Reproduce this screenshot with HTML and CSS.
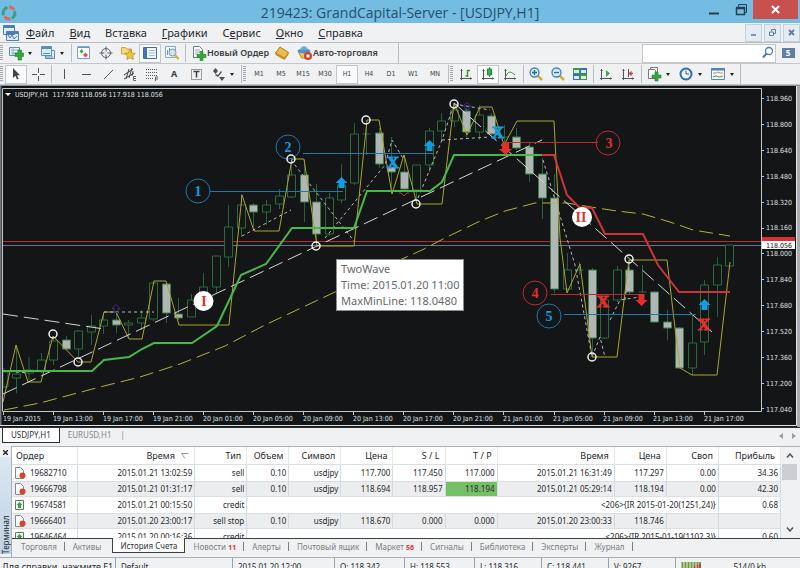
FILE: index.html
```html
<!DOCTYPE html>
<html lang="ru">
<head>
<meta charset="utf-8">
<title>219423: GrandCapital-Server - [USDJPY,H1]</title>
<link rel="stylesheet" href="styles.css">
</head>
<body>
<header class="titlebar">
  <svg class="logo" width="18" height="18" viewBox="0 0 18 18" fill="none" stroke-width="3"><path d="M9 3a6 6 0 0 1 5 3" stroke="#e8635a"/><path d="M14.4 7a6 6 0 0 1-2.400 7.200" stroke="#3aa08c"/><path d="M10.500 14.800a6 6 0 0 1-6-2.200" stroke="#e8635a"/><path d="M3.600 11.300a6 6 0 0 1 3.800-8" stroke="#3aa08c"/></svg>
  <h1>219423: GrandCapital-Server - [USDJPY,H1]</h1>
  <div class="window-buttons">
    <button aria-label="Свернуть"><svg width="12" height="18" viewBox="0 0 12 18"><path d="M1 12.500h10" stroke="#24404f" stroke-width="2"/></svg></button>
    <button aria-label="Восстановить"><svg width="12" height="18" viewBox="0 0 12 18" fill="none" stroke="#24404f"><path d="M3.500 5.500v-2h8v8h-2"/><path d="M1 6.500h8.500v7h-8v-7M1 7.500h8" stroke-width="1.500"/></svg></button>
    <button class="close" aria-label="Закрыть"><svg width="9" height="9" viewBox="0 0 9 9"><path d="M1 1l7 7M8 1l-7 7" stroke="#fff" stroke-width="2"/></svg></button>
  </div>
</header>

<nav class="menubar">
  <svg width="16" height="16" viewBox="0 0 16 16" fill="#dcecf8" stroke="#4d7fb3"><path d="M.5.500h11v9h-11zM3.500 6.500h12v9h-12z"/><path d="M.5 2h11M3.500 8h12" stroke-width="2"/><path d="M5 10l2 3 2-3 2 4 3-3" fill="none"/></svg>
  <a href="#file"><u>Ф</u>айл</a>
  <a href="#view"><u>В</u>ид</a>
  <a href="#insert">Вст<u>а</u>вка</a>
  <a href="#charts"><u>Г</u>рафики</a>
  <a href="#service">С<u>е</u>рвис</a>
  <a href="#window"><u>О</u>кно</a>
  <a href="#help"><u>С</u>правка</a>
  <div class="mdi-buttons">
    <button aria-label="Свернуть окно"><svg width="9" height="9" viewBox="0 0 9 9"><path d="M2 7h5" stroke="#5f7d96" stroke-width="1.500"/></svg></button>
    <button aria-label="Восстановить окно"><svg width="9" height="9" viewBox="0 0 9 9" fill="none" stroke="#5f7d96"><path d="M3.500 3v-1.500h4v4H6M1.500 4h4v3.500h-4z"/></svg></button>
    <button aria-label="Закрыть окно"><svg width="9" height="9" viewBox="0 0 9 9"><path d="M2 2l5 5M7 2l-5 5" stroke="#5f7d96" stroke-width="1.800"/></svg></button>
  </div>
</nav>

<div class="toolbar">
  <i class="grip"></i>
  <button class="split" aria-label="Новый график"><svg width="16" height="16" viewBox="0 0 16 16"><path d="M1.500 2.500h10v8h-10z" fill="#e4f1fa" stroke="#5d8db8"/><path d="M3 5h7M3 8h7M5 3v7" stroke="#8ab0d0"/><path d="M7 8h3V5h3.500v3h2v3.500h-2V15H10v-3.500H7z" fill="#35a83c" stroke="#1e7f28" stroke-width=".6"/></svg><span class="caret"></span></button>
  <button class="split" aria-label="Профили"><svg width="16" height="16" viewBox="0 0 16 16" fill="#dcecf8" stroke="#5d8db8"><path d="M5.500 5.500h9v8h-9z"/><path d="M1.500 1.500h10v9h-10z"/><path d="M1.500 3h10" stroke-width="2"/><path d="M3 8.500h7M5 12h8"/></svg><span class="caret"></span></button>
  <i class="sep"></i>
  <button aria-label="Обзор рынка"><svg width="16" height="16" viewBox="0 0 16 16"><path d="M1.500 2.500h12v11h-12z" fill="#fff" stroke="#7ba0c4"/><path d="M1.500 2h12" stroke="#5f93c8" stroke-width="1.500"/><path d="M5.500 4l2 2.500-2 2-2-2z" fill="#3caa44"/><path d="M9.500 7.500l2.500 2.500-2.500 2.500L7 10z" fill="#dc5148"/></svg></button>
  <button aria-label="Окно данных"><svg width="16" height="16" viewBox="0 0 16 16" fill="none" stroke="#56606a"><circle cx="8" cy="8" r="4.500"/><path d="M8 1.500v5M8 9.500v5M1.500 8h5M9.500 8h5"/></svg></button>
  <button aria-label="Навигатор"><svg width="16" height="16" viewBox="0 0 16 16" stroke="#b28d25" stroke-width=".7"><path d="M1.500 9V2.500h4l1 1.500h5v5z" fill="#f6dc77"/><path d="M10 4.500l1.700 3.400 3.600.5-2.600 2.500.6 3.600-3.300-1.700-3.200 1.700.6-3.600L4.800 8.400l3.600-.5z" fill="#f1c535"/></svg></button>
  <button class="pressed" aria-label="Терминал"><svg width="16" height="16" viewBox="0 0 16 16"><path d="M1.500 2.500h13v11h-13z" fill="#eef5fb" stroke="#3f6d9e"/><path d="M2 3h3v10H2z" fill="#3f79b7"/><path d="M7 5.500h6M7 8h6M7 10.500h6" stroke="#a7c2dc"/></svg></button>
  <button aria-label="Тестер"><svg width="16" height="16" viewBox="0 0 16 16"><path d="M1.500 1.500h10v11h-10z" fill="#f1f7fb" stroke="#8daac2"/><path d="M3.500 10V5M5.500 8V3M9 6V4" stroke="#6e95b8"/><circle cx="8.500" cy="7.500" r="3.500" fill="#cfe4f2" stroke="#789bb5"/><path d="M11 10l3.500 4" stroke="#d6a93c" stroke-width="2"/></svg></button>
  <i class="sep"></i>
  <button class="labelled"><svg width="16" height="16" viewBox="0 0 16 16"><path d="M2.500 1.500h6l3 3v8h-9z" fill="#fff" stroke="#707d86"/><path d="M4 5h5M4 7h5M4 9h3" stroke="#98a5ad"/><path d="M6 9.500h3v-3h3v3h3v3h-3v3H9v-3H6z" fill="#35a83c" stroke="#1e7f28" stroke-width=".6"/></svg>Новый Ордер</button>
  <button aria-label="MetaEditor"><svg width="16" height="16" viewBox="0 0 16 16"><path d="M6 2l8.500 5.500-4 5.500L1.500 8z" fill="#efbd43" stroke="#b37a1d"/><path d="M1.500 8v2l9 5 4-5.500v-2l-4 5.500z" fill="#c88b22"/></svg></button>
  <button class="labelled"><svg width="16" height="16" viewBox="0 0 16 16"><path d="M1.500 7h11l-2 6h-6z" fill="#f1c64b" stroke="#b88e29"/><ellipse cx="7" cy="6" rx="6.500" ry="2.500" fill="#4d93cd"/><path d="M3 5c1-5 7-5 8 0z" fill="#6badd9"/><circle cx="11" cy="11" r="4" fill="#d83a30"/><path d="M9.500 9.500h3v3h-3z" fill="#fff"/></svg>Авто-торговля</button>
  <i class="toolbar-end"></i>
  <div class="search">
    <input type="search" aria-label="Поиск">
    <svg width="14" height="14" viewBox="0 0 14 14" fill="none" stroke="#5378ac"><circle cx="8" cy="5" r="3.500" stroke-width="1.300"/><path d="M5.500 7.500L2 11.500" stroke-width="2"/></svg>
  </div>
  <button class="chat" aria-label="Сообщения: 5"><span>5</span></button>
</div>

<div class="toolbar">
  <i class="grip"></i>
  <button class="pressed" aria-label="Курсор"><svg width="16" height="16" viewBox="0 0 16 16"><path d="M5 2v10l2.400-2.200L9 13.500l1.600-.7L9 9.300h3z" fill="#3f4347"/></svg></button>
  <button aria-label="Перекрестие"><svg width="16" height="16" viewBox="0 0 16 16"><path d="M8.500 2v5M8.500 10v5M2 8.500h5M10 8.500h5" stroke="#555"/></svg></button>
  <i class="sep"></i>
  <button aria-label="Вертикальная линия"><svg width="16" height="16" viewBox="0 0 16 16"><path d="M8.500 3v10" stroke="#555"/></svg></button>
  <button aria-label="Горизонтальная линия"><svg width="16" height="16" viewBox="0 0 16 16"><path d="M4 8.500h9" stroke="#555"/></svg></button>
  <button aria-label="Трендовая линия"><svg width="16" height="16" viewBox="0 0 16 16"><path d="M4 13l9-9" stroke="#555"/></svg></button>
  <button aria-label="Канал"><svg width="16" height="16" viewBox="0 0 16 16" fill="none" stroke="#444"><path d="M2 9l9-6M2 13l10-6M4 13l3-10M7 12l3-10M10 10l1-5"/><path d="M14 10.500h-2.500v4H14M11.500 12.500H14" stroke-width=".8"/></svg></button>
  <button aria-label="Фибоначчи"><svg width="16" height="16" viewBox="0 0 16 16" stroke="#555"><path d="M2 3.500h12M2 6.500h12M2 9.500h12M2 12.500h7" stroke-dasharray="1 1"/><path d="M11.500 15v-4H14M11.500 13H14" fill="none" stroke-width=".9"/></svg></button>
  <button class="letter" aria-label="Текст">A</button>
  <button aria-label="Метка"><svg width="16" height="16" viewBox="0 0 16 16" fill="none" stroke="#444"><path d="M3.500 3.500h10v10h-10z" stroke-dasharray="1 1"/><path d="M5.500 5.500h6M8.500 5.500v6" stroke-width="1.500"/></svg></button>
  <button class="split" aria-label="Стрелки"><svg width="16" height="16" viewBox="0 0 16 16" fill="#4b4f53"><path d="M3 5l2.500-3L8 5 5.500 8zM9 11h6l-3 4zM6 8l2 1 3-4 1 1-4 5-3-2z"/></svg><span class="caret"></span></button>
  <i class="sep"></i><i class="grip"></i>
  <div class="timeframes">
    <button>M1</button><button>M5</button><button>M15</button><button>M30</button><button class="pressed">H1</button><button>H4</button><button>D1</button><button>W1</button><button>MN</button>
  </div>
  <i class="sep"></i><i class="grip"></i>
  <button aria-label="Бары"><svg width="16" height="16" viewBox="0 0 16 16" fill="none" stroke="#555"><path d="M3.500 3v11M2 12.500h12M2.500 4.500h2M12.500 11.500v2"/><path d="M9.500 4v7M9.500 4.500h2.500M7.500 10h2" stroke="#2e9b3a" stroke-width="1.500"/></svg></button>
  <button class="pressed" aria-label="Свечи"><svg width="16" height="16" viewBox="0 0 16 16" fill="none" stroke="#555"><path d="M3.500 3v11M2 12.500h12M2.500 4.500h2M12.500 11.500v2"/><path d="M9.500 1v10" stroke="#2e9b3a"/><path d="M7.500 3h4v6h-4z" fill="#37b046" stroke="#23873a"/></svg></button>
  <button aria-label="Линия"><svg width="16" height="16" viewBox="0 0 16 16" fill="none" stroke="#555"><path d="M3.500 3v11M2 12.500h12M2.500 4.500h2M12.500 11.500v2"/><path d="M4 10c3-6 5-4 9-1" stroke="#2e9b3a"/></svg></button>
  <i class="sep"></i>
  <button aria-label="Приблизить"><svg width="16" height="16" viewBox="0 0 16 16"><path d="M9.500 9.500l4.500 4.500" stroke="#d8ab34" stroke-width="2.500"/><circle cx="6.500" cy="6.500" r="4.500" fill="#d5ebf8" stroke="#3c84bd" stroke-width="1.300"/><path d="M4 6.500h5M6.500 4v5" stroke="#2769a5" stroke-width="1.300"/></svg></button>
  <button aria-label="Отдалить"><svg width="16" height="16" viewBox="0 0 16 16"><path d="M9.500 9.500l4.500 4.500" stroke="#d8ab34" stroke-width="2.500"/><circle cx="6.500" cy="6.500" r="4.500" fill="#d5ebf8" stroke="#3c84bd" stroke-width="1.300"/><path d="M4 6.500h5" stroke="#2769a5" stroke-width="1.300"/></svg></button>
  <button aria-label="Плитка"><svg width="16" height="16" viewBox="0 0 16 16"><path d="M1 2h7v6H1zM8 8h7v6H8z" fill="#3d9b44"/><path d="M8 2h7v6H8zM1 8h7v6H1z" fill="#3a6fb5"/><path d="M2 4h5v3H2zM9 4h5v3H9zM2 10h5v3H2zM9 10h5v3H9z" fill="#dcefe2"/></svg></button>
  <i class="sep"></i>
  <button aria-label="Автопрокрутка"><svg width="16" height="16" viewBox="0 0 16 16" fill="none" stroke="#555"><path d="M3.500 3v11M2 12.500h12M2.500 4.500h2M12.500 11.500v2"/><path d="M8 4l4 3.500L8 11z" fill="#39a847" stroke="none"/></svg></button>
  <button aria-label="Сдвиг графика"><svg width="16" height="16" viewBox="0 0 16 16" fill="none" stroke="#555"><path d="M3.500 3v11M2 12.500h12M2.500 4.500h2M12.500 11.500v2M8.500 3v8"/><path d="M9 7.500h4M11.500 5.500L9.500 7.500l2 2" stroke="#d0453b" stroke-width="1.300"/></svg></button>
  <i class="sep"></i>
  <button class="split" aria-label="Индикаторы"><svg width="16" height="16" viewBox="0 0 16 16"><path d="M4.500 1.500h7v10h-7z" fill="#fff" stroke="#777"/><path d="M2.500 3.500h6l1 1v8h-7z" fill="#fff" stroke="#777"/><path d="M6 9h3V6h3v3h3v3h-3v3H9v-3H6z" fill="#35a83c" stroke="#1e7f28" stroke-width=".6"/></svg><span class="caret"></span></button>
  <button class="split" aria-label="Периоды"><svg width="16" height="16" viewBox="0 0 16 16"><circle cx="8" cy="8" r="5.500" fill="#edf6fc" stroke="#2d6cab" stroke-width="2"/><path d="M8 4.500V8h3" fill="none" stroke="#35597c"/></svg><span class="caret"></span></button>
  <button class="split" aria-label="Шаблоны"><svg width="16" height="16" viewBox="0 0 16 16"><path d="M1.500 2.500h13v11h-13z" fill="#f4f9fc" stroke="#5c87b2"/><path d="M1 3.500h14" stroke="#4b80b8" stroke-width="2"/><path d="M3 7h3l2-1 2 1h3" fill="none" stroke="#c58b50"/><path d="M3 11l3-1 3 1 4-1" fill="none" stroke="#4b9b5a"/></svg><span class="caret"></span></button>
  <i class="toolbar-end"></i>
</div>

<main class="chart">
<svg class="plot" viewBox="0 85 800 342" role="img" aria-label="USDJPY,H1">
  <rect x="0" y="85" width="800" height="342" fill="#141517"/>
  <path d="M0 85.500h800" stroke="#8a9294"/>
  <path d="M0 86v340" stroke="#737a80" stroke-width="3"/>
  <path d="M0 425.500h796.500V86" fill="none" stroke="#e4e6e8"/>
  <path d="M798.500 86v341" stroke="#a9abae" stroke-width="3"/>
  <path d="M3 241.500h758" stroke="#b52f30"/>
  <path d="M3 245.500h758" stroke="#69748c"/>
  <g class="candles">
    <path class="wick" d="M4 368v20M16.500 345v48M29 357v25M41.500 353v20M53.500 338v27M66.500 336v14M78.500 330v27M91.500 315v30M103.500 313v21M116.500 313v20M128.500 320v18M141.500 310v20M153.500 281v40M166.500 282v41M178.500 298v22M191.500 294v23M203.500 273v19M216.500 256v38M228.500 205v62M241.500 194v43M253.500 203v26M266.500 200v25M279.500 189v20M291.500 159v39M304.500 160v62M316.500 184v61M329.500 193v43M341.500 164v39M354.500 123v62M366.500 120v35M379.500 128v40M391.500 137v56M404.500 155v37M416.500 165v35M429.500 128v44M441.500 113v29M454.500 105v22M466.500 108v29M479.500 105v35M491.500 113v25M504.500 125v22M516.500 128v22M529.500 143v39M542.500 158v61M554.500 174v119M567.500 253v39M579.500 262v13M592.500 268v89M604.500 298v41M617.500 266v36M629.500 260v35M642.500 265v28M654.500 291v32M667.500 310v30M679.500 327v42M692.500 315v60M704.500 280v75M717.500 257v60M729.500 245v24"/>
    <path class="up" d="M3 372h5v15h-5zM12.500 374h8v4h-8zM25.500 370h8v3h-8zM37.500 360h8v11h-8zM49.500 341h8v19h-8zM74.500 331h8v18h-8zM87.500 326h8v6h-8zM99.500 320h8v6h-8zM124.500 323h8v2h-8zM137.500 318h8v5h-8zM149.500 283h8v36h-8zM187.500 300h8v17h-8zM199.500 287h8v13h-8zM212.500 256h8v31h-8zM224.500 227h8v30h-8zM237.500 205h8v23h-8zM262.500 205h8v7h-8zM275.500 196h8v8h-8zM287.500 175h8v22h-8zM325.500 198h8v36h-8zM337.500 185h8v15h-8zM350.500 134h8v49h-8zM362.500 134h8M412.500 165h8v25h-8zM425.500 131h8v34h-8zM437.500 121h8v10h-8zM450.500 110h8v11h-8zM475.500 115h8v17h-8zM500.500 137h8M563.500 270h8v19h-8zM575.500 270h8M600.500 300h8v38h-8zM613.500 270h8v30h-8zM638.500 292h8M688.500 343h8v25h-8zM700.500 285h8v57h-8zM713.500 265h8v20h-8zM725.500 245h8v21h-8z"/>
    <path class="down" d="M62.500 340h8v9h-8zM112.500 320h8v5h-8zM162.500 284h8v29h-8zM174.500 314h8v4h-8zM249.500 205h8v7h-8zM300.500 175h8v27h-8zM312.500 202h8v32h-8zM375.500 133h8v31h-8zM387.500 167h8v5h-8zM400.500 172h8v17h-8zM462.500 111h8v21h-8zM487.500 116h8v18h-8zM512.500 137h8v11h-8zM525.500 147h8v27h-8zM538.500 174h8v24h-8zM550.500 198h8v91h-8zM588.500 270h8v68h-8zM625.500 270h8v22h-8zM650.500 292h8v30h-8zM663.500 322h8v6h-8zM675.500 328h8v40h-8z"/>
  </g>
  <g fill="none">
    <path class="zigzag" d="M3 402L16 345 28 382H41L53 336 78 362H91L104 312H116L129 339H142L154 281H166L179 325H229L242 195 254 231H279L292 159H304L317 246H354L367 120H379L392 194 404 155 417 204H442L454 103 467 135 480 107H492L504 145 517 121H554L560 238 567 293 580 264 592 357H617L629 260H667L675 328 680 368 692 375H717L730 262"/>
    <path class="slow" d="M4 410L40 403 100 387 140 377 180 364 205 354 225 346 265 325 335 292 402 259 422 250 445 238 478 222 505 211 535 203 567 203 597 208 617 211 643 214 670 222 693 230 730 236"/>
    <path class="trend" d="M3 394L542 140M3 314L104 329M454 103L712 332"/>
    <path class="swing" d="M4 371L28 373M104 312H154M242 236L291 210M291 160L354 241M325 238L385 165 392 140 404 160M418 198L442 140 452 110M454 104L490 110M442 140L490 137M543 160L575 265 592 357 600 337 605 357M610 320L620 300 640 297M625 300L629 265"/>
    <path d="M3 371H92L104 360 129 357 142 349 154 343H192L217 326 241 275 266 264 292 228H354L367 191H430L442 182 454 155H542" stroke="#46b94a" stroke-width="2"/>
    <path d="M542 155H554L567 195 579 207 592 208 605 234H643L658 265 679 292H730" stroke="#cf3334" stroke-width="2"/>
    <g stroke="#1b79ac"><path d="M210 191.500H343M303 153.500H433M564 314.500H696"/><circle cx="198" cy="191" r="12"/><circle cx="288" cy="147" r="12"/><circle cx="549" cy="316" r="12"/></g>
    <g stroke="#c02c2e"><path d="M505 142.500H598M551 294.500H642"/><circle cx="608" cy="143" r="12"/><circle cx="535" cy="293" r="12"/></g>
    <g stroke="#f1f1f1" stroke-width="1.500"><circle cx="53" cy="334" r="4"/><circle cx="78" cy="362" r="4"/><circle cx="291" cy="159" r="4"/><circle cx="316" cy="246" r="4"/><circle cx="366" cy="120" r="4"/><circle cx="416" cy="204" r="4"/><circle cx="454" cy="104" r="4"/><circle cx="629" cy="259" r="4"/><circle cx="592" cy="357" r="4"/></g>
    <path d="M116 304.500l4 4h-2v4h-4v-4h-2zM467 102.500l4 4h-2v3h-4v-3h-2z" stroke="#3d3191"/>
    <path d="M399 193h2l3 3 3-3h2" stroke="#b93534"/>
  </g>
  <path d="M341.500 177l6 6h-3v5h-6v-5h-3zM429.500 140l6 6h-3v5h-6v-5h-3zM704.500 299l6 6h-3v5h-6v-5h-3z" fill="#159be0"/>
  <path d="M505.500 155l6.500-6h-3v-6h-7v6h-3zM641.500 306l6-6h-3v-6h-6v6h-3z" fill="#e32f2b"/>
  <circle cx="203.500" cy="301" r="10" fill="#fff"/><circle cx="582" cy="217" r="10" fill="#fff"/>
  <g class="mark">
    <g class="blue"><text x="198" y="196">1</text><text x="288" y="152">2</text><text x="549" y="321">5</text></g>
    <g class="red"><text x="609" y="148">3</text><text x="535" y="298">4</text><text x="204" y="306">I</text><text x="581" y="222">II</text></g>
    <g class="cross"><text class="blue" x="393" y="168">X</text><text class="blue" x="498" y="138">X</text><text class="red" x="603" y="307">X</text><text class="red" x="704" y="330">X</text></g>
  </g>
  <path d="M2.500 411V88.500H761.500V411.500H2.500" fill="none" stroke="#c3c7ca"/>
  <path d="M3.500 412v3M53.500 412v3M103.500 412v3M153.500 412v3M203.500 412v3M253.500 412v3M303.500 412v3M353.500 412v3M403.500 412v3M453.500 412v3M503.500 412v3M554.500 412v3M604.500 412v3M654.500 412v3M704.500 412v3M762 98.500h2M762 124.500h2M762 150.500h2M762 176.500h2M762 202.500h2M762 228.500h2M762 253.500h2M762 279.500h2M762 305.500h2M762 331.500h2M762 357.500h2M762 383.500h2M762 408.500h2" stroke="#c3c7ca"/>
  <path d="M5 93h6l-3 3z" fill="#fff"/>
  <g class="axis">
    <text x="15" y="97">USDJPY,H1&#160; 117.928 118.056 117.918 118.056</text>
    <text x="766" y="101">118.960</text><text x="766" y="127">118.800</text><text x="766" y="153">118.640</text><text x="766" y="179">118.480</text><text x="766" y="205">118.320</text><text x="766" y="230">118.160</text><text x="766" y="256">118.000</text><text x="766" y="282">117.840</text><text x="766" y="308">117.680</text><text x="766" y="334">117.520</text><text x="766" y="360">117.360</text><text x="766" y="386">117.200</text><text x="766" y="412">117.040</text>
    <text x="3" y="421">19 Jan 2015</text><text x="53" y="421">19 Jan 13:00</text><text x="103" y="421">19 Jan 17:00</text><text x="153" y="421">19 Jan 21:00</text><text x="203" y="421">20 Jan 01:00</text><text x="253" y="421">20 Jan 05:00</text><text x="303" y="421">20 Jan 09:00</text><text x="353" y="421">20 Jan 13:00</text><text x="403" y="421">20 Jan 17:00</text><text x="453" y="421">20 Jan 21:00</text><text x="503" y="421">21 Jan 01:00</text><text x="553" y="421">21 Jan 05:00</text><text x="603" y="421">21 Jan 09:00</text><text x="653" y="421">21 Jan 13:00</text><text x="704" y="421">21 Jan 17:00</text>
  </g>
  <path d="M762 237h33v5h-33z" fill="#d8302f"/>
  <path d="M762 241h33v8h-33z" fill="#fff"/>
  <text class="current" x="766" y="248">118.056</text>
</svg>
<div class="tooltip" role="tooltip">TwoWave<br>Time: 2015.01.20 11:00<br>MaxMinLine: 118.0480</div>
</main>

<nav class="chart-tabs">
  <a class="active" href="#usdjpy">USDJPY,H1</a>
  <a href="#eurusd">EURUSD,H1</a>
  <div class="arrows"><button aria-label="Назад"><svg width="4" height="6" viewBox="0 0 4 6"><path d="M4 0v6L0 3z" fill="#9a9da1"/></svg></button><button aria-label="Вперёд"><svg width="4" height="6" viewBox="0 0 4 6"><path d="M0 0v6l4-3z" fill="#9a9da1"/></svg></button></div>
</nav>

<section class="terminal">
  <aside>
    <button aria-label="Закрыть терминал"><svg width="5" height="5" viewBox="0 0 5 5"><path d="M0 0l5 5M5 0L0 5" stroke="#222" stroke-width="1.300"/></svg></button>
    <h2>Терминал</h2>
  </aside>
  <div class="pane">
    <div class="grid">
      <table>
        <colgroup><col class="c-order"><col class="c-time"><col class="c-std"><col class="c-vol"><col class="c-std"><col class="c-std"><col class="c-std"><col class="c-std"><col class="c-time"><col class="c-std"><col class="c-std"><col class="c-profit"></colgroup>
        <thead><tr><th>Ордер</th><th>Время <svg width="8" height="6" viewBox="0 0 8 6"><path d="M7.500.500h-7l3.500 5" fill="none" stroke="#999"/></svg></th><th>Тип</th><th>Объем</th><th>Символ</th><th>Цена</th><th>S / L</th><th>T / P</th><th>Время</th><th>Цена</th><th>Своп</th><th>Прибыль</th></tr></thead>
        <tbody>
          <tr><td><svg width="12" height="12" viewBox="0 0 12 12"><path d="M1.500.500h5l3 3v8h-8z" fill="#fff" stroke="#7d8890"/><circle cx="8.500" cy="8.500" r="3" fill="#d0452f"/></svg>19682710</td><td>2015.01.21 13:02:59</td><td>sell</td><td>0.10</td><td>usdjpy</td><td>117.700</td><td>117.450</td><td>117.000</td><td>2015.01.21 16:31:49</td><td>117.297</td><td>0.00</td><td>34.36</td></tr>
          <tr><td><svg width="12" height="12" viewBox="0 0 12 12"><path d="M1.500.500h5l3 3v8h-8z" fill="#fff" stroke="#7d8890"/><circle cx="8.500" cy="8.500" r="3" fill="#d0452f"/></svg>19666798</td><td>2015.01.21 01:31:17</td><td>sell</td><td>0.10</td><td>usdjpy</td><td>118.694</td><td>118.957</td><td class="hit">118.194</td><td>2015.01.21 05:29:14</td><td>118.194</td><td>0.00</td><td>42.30</td></tr>
          <tr><td><svg width="12" height="12" viewBox="0 0 12 12"><path d="M1.500 1.500h8v9h-8z" fill="#f1f8f1" stroke="#64736a"/><path d="M5.500 3l3 3h-1.500v3h-3V6H2.500z" fill="#36a23e"/></svg>19674581</td><td>2015.01.21 00:15:50</td><td>credit</td><td colspan="8">&lt;206&gt;{IR 2015-01-20(1251,24)}</td><td>0.68</td></tr>
          <tr><td><svg width="12" height="12" viewBox="0 0 12 12"><path d="M1.500.500h5l3 3v8h-8z" fill="#fff" stroke="#7d8890"/><circle cx="8.500" cy="8.500" r="3" fill="#d0452f"/></svg>19666401</td><td>2015.01.20 23:00:17</td><td>sell stop</td><td>0.10</td><td>usdjpy</td><td>118.670</td><td>0.000</td><td>0.000</td><td>2015.01.20 23:00:33</td><td>118.746</td><td></td><td></td></tr>
          <tr><td><svg width="12" height="12" viewBox="0 0 12 12"><path d="M1.500 1.500h8v9h-8z" fill="#f1f8f1" stroke="#64736a"/><path d="M5.500 3l3 3h-1.500v3h-3V6H2.500z" fill="#36a23e"/></svg>19646464</td><td>2015.01.20 00:16:36</td><td>credit</td><td colspan="8">&lt;206&gt;{IR 2015-01-19(1102,3)}</td><td>0.60</td></tr>
        </tbody>
      </table>
      <div class="scrollbar">
        <button aria-label="Вверх"><svg width="8" height="5" viewBox="0 0 8 5"><path d="M1 4.500L4 1l3 3.500" fill="none" stroke="#50545a" stroke-width="1.500"/></svg></button>
        <i></i>
        <button aria-label="Вниз"><svg width="8" height="5" viewBox="0 0 8 5"><path d="M1 .5L4 4 7 .5" fill="none" stroke="#50545a" stroke-width="1.500"/></svg></button>
      </div>
    </div>
    <nav class="tabs">
      <a href="#trade">Торговля</a><a href="#assets">Активы</a><a class="active" href="#history">История Счета</a><a href="#news">Новости <b>11</b></a><a href="#alerts">Алерты</a><a href="#mail">Почтовый ящик</a><a href="#market">Маркет <b>56</b></a><a href="#signals">Сигналы</a><a href="#library">Библиотека</a><a href="#experts">Эксперты</a><a href="#journal">Журнал</a>
    </nav>
  </div>
</section>

<footer class="status">
  <span class="s-help">Для справки, нажмите F1</span><span class="s-profile">Default</span><span class="s-time">2015.01.20 12:00</span><span class="s-price">O: 118.342</span><span class="s-price">H: 118.553</span><span class="s-value">L: 118.316</span><span class="s-value">C: 118.441</span><span class="s-value">V: 9267</span>
  <span class="s-net"><svg width="20" height="10" viewBox="0 0 20 10"><path d="M1.500 0v10M4.500 0v10M7.500 0v10M10.500 0v6M13.500 0v4M16.500 0v3M19 0v2" stroke="#6b9a36" stroke-width="2"/><path d="M10.500 6v4M13.500 4v6M16.500 3v7M19 2v8" stroke="#b8423c" stroke-width="2"/></svg>514/0 kb</span>
</footer>
</body>
</html>
```
FILE: styles.css
```css
* { box-sizing: border-box; }
body {
  margin: 0;
  height: 100vh;
  overflow: hidden;
  display: flex;
  flex-direction: column;
  background: #f0f1f3;
  color: #26292c;
  font: 8px/12px "Noto Sans", "Open Sans", sans-serif;
}
body > * { flex: none; }
button {
  padding: 0;
  border: 0;
  background: none;
  color: inherit;
  font: inherit;
  display: flex;
  align-items: center;
  justify-content: center;
}
a { color: inherit; text-decoration: none; }
svg { display: block; flex: none; }
h1, h2 { margin: 0; font-weight: 400; }

.titlebar {
  height: 23px;
  display: grid;
  grid-template-columns: 1fr auto 1fr;
  align-items: center;
  background: #74bce2;
}
.titlebar h1 { font: 14px/25px "Open Sans", sans-serif; color: #25506a; }
.window-buttons { display: flex; justify-content: flex-end; align-self: start; padding-right: 2px; }
.window-buttons button { width: 27px; height: 19px; }
.window-buttons .close { width: 45px; margin-left: -1px; background: #c8504f; }

.menubar {
  height: 20px;
  display: flex;
  align-items: center;
  gap: 15px;
  padding-left: 3px;
  border-bottom: 1px solid #b9bcc0;
  font-size: 11px;
  line-height: 16px;
  color: #25282b;
}
.menubar > svg { margin-right: -8px; }
.mdi-buttons { display: flex; gap: 2px; margin-left: auto; }
.mdi-buttons button { width: 17px; height: 18px; border: 1px solid #c3d0dc; background: #e4ebf2; }

.toolbar { height: 21px; display: flex; align-items: center; border-bottom: 1px solid #c5c8cb; }
.toolbar button { width: 22px; height: 19px; color: #3d4043; }
.toolbar .split { width: 32px; justify-content: flex-start; padding-left: 3px; gap: 4px; }
.toolbar .pressed { background: #f9fafb; border: 1px solid #c2c5c9; }
.toolbar .labelled { width: auto; padding: 0 2px 0 4px; gap: 0; font-size: 9px; font-weight: 600; }
.toolbar .letter { font-size: 9px; font-weight: 700; }
.grip { width: 3px; height: 16px; margin-right: 2px; background: repeating-linear-gradient(#a3a7ab 0 1px, transparent 1px 2px); }
.sep { width: 4px; height: 18px; border-right: 1px solid #b9bcc0; margin-right: 1px; margin-left: -1px; }
.caret { border: 2px solid transparent; border-top: 3px solid #222; border-bottom: 0; }
.toolbar-end { align-self: stretch; width: 19px; border-right: 1px solid #b9bcc0; }
.split + .toolbar-end { width: 2px; }
.timeframes { display: flex; font: 7px/12px "DejaVu Sans Condensed", "DejaVu Sans", sans-serif; }
.search { display: flex; align-items: center; width: 134px; height: 19px; margin-left: auto; background: #fff; border: 1px solid #c5c8cb; }
.search input { flex: 1; min-width: 0; border: 0; background: none; outline: 0; }
.toolbar .chat { width: 24px; }
.chat span { width: 13px; height: 10px; background: #5d7ea8; color: #fff; font: 700 8px/10px "Noto Sans", sans-serif; }

.chart { position: relative; }
.plot { width: 100%; height: auto; }
.wick { stroke: #28623a; fill: none; }
.up { stroke: #2b6a3c; fill: #141517; }
.down { stroke: #3c7c4b; fill: #b1b5b3; }
.zigzag { stroke: #aaa52e; }
.slow { stroke: #b5b136; stroke-dasharray: 14 6; }
.trend { stroke: #d5d5d5; stroke-dasharray: 15 6; }
.swing { stroke: #b9b9b9; stroke-dasharray: 3 3; }
.axis { font: 7px "DejaVu Sans Condensed", "DejaVu Sans", sans-serif; fill: #dfe1e3; }
.current { font: 7px "DejaVu Sans Condensed", "DejaVu Sans", sans-serif; fill: #111; }
.mark { font: 700 14px "Liberation Serif", serif; text-anchor: middle; }
.cross { font-size: 17px; }
.cross .blue { stroke: #159be0; }
.cross .red { stroke: #e32f2b; }
.blue { fill: #159be0; }
.red { fill: #e32f2b; }
.tooltip {
  position: absolute;
  left: 42%;
  top: 51%;
  padding: 1px 4px;
  border: 1px solid #8b8d8f;
  background: #fff;
  color: #66686a;
  font-size: 11px;
  line-height: 16px;
  white-space: nowrap;
}

.chart-tabs { display: flex; height: 19px; padding-left: 2px; border-top: 1px solid #2d3033; font-size: 8px; color: #85888c; }
.chart-tabs a { height: 15px; padding: 0 8px; line-height: 14px; }
.chart-tabs a:not(.active)::after { content: "|"; padding-left: 9px; }
.chart-tabs .active { background: #fff; border: solid #2d3033; border-width: 0 1px 1px; color: #303336; }
.arrows { display: flex; align-items: center; gap: 9px; margin-left: auto; padding-right: 4px; height: 15px; }

.terminal { display: flex; border-bottom: 1px solid #aaadb1; }
.terminal aside { width: 11px; display: flex; flex-direction: column; align-items: center; padding-top: 2px; }
.terminal aside button { width: 9px; height: 9px; }
.terminal h2 {
  flex: 1;
  width: 11px;
  margin-bottom: 3px;
  background: linear-gradient(#bdd3e4, #dbe7f0);
  writing-mode: vertical-rl;
  transform: rotate(180deg);
  font-size: 8px;
  line-height: 11px;
}
.pane { flex: 1; min-width: 0; border-left: 1px solid #aeb1b5; border-top: 1px solid #aeb1b5; }
.grid { display: flex; height: 92px; overflow: hidden; border-bottom: 1px solid #3c3f43; padding-right: 2px; }
table { flex: 1; align-self: flex-start; border-collapse: separate; border-spacing: 0; table-layout: fixed; background: #fff; }
.c-order { width: 66px; }
.c-time { width: 117px; }
.c-std { width: 52px; }
.c-vol { width: 42px; }
.c-profit { width: 62px; }
th, td { height: 16px; padding: 0 2px; text-align: right; border-right: 1px solid #d4dbe0; white-space: nowrap; }
th { height: 18px; padding-right: 5px; font-weight: 400; font-size: 9px; border-bottom: 1px solid #dcdfe2; border-right-color: #e8eaec; }
th:first-child { text-align: left; padding-left: 4px; }
td:first-child { text-align: left; }
td svg { display: inline-block; vertical-align: middle; margin-right: 4px; }
th svg { display: inline-block; margin: 0 0 0 4px; }
tbody tr:nth-child(even) td { background: #ebedee; border-bottom: 1px solid #dcdfe2; border-top: 1px solid #dcdfe2; }
tbody tr:nth-child(even) .hit { background: #76bf68; }
.scrollbar { width: 17px; display: flex; flex-direction: column; align-items: center; }
.scrollbar button { height: 17px; }
.scrollbar i { width: 15px; height: 16px; margin-bottom: auto; background: #cdced1; }

.tabs { display: flex; height: 18px; padding-left: 1px; color: #7b7e82; }
.tabs a { height: 15px; padding: 0 8px; line-height: 15px; position: relative; white-space: nowrap; }
.tabs a:not(.active)::after { content: ""; position: absolute; right: 0; top: 3px; height: 9px; border-right: 1px solid #7b7e82; }
.tabs a:nth-child(2)::after { display: none; }
.tabs .active { margin: -1px 0 0 3px; padding: 0 7px; background: #fff; border: solid #3c3f43; border-width: 0 1px 1px; color: #303336; }
.tabs b { color: #d83a30; font-size: 7px; }

.status { display: flex; height: 17px; padding-left: 2px; line-height: 17px; }
.status span { padding-left: 5px; border-left: 1px solid #9b9ea2; white-space: nowrap; }
.status .s-help { width: 113px; padding-left: 0; border: 0; font-size: 9px; }
.s-profile { width: 117px; }
.s-time { width: 102px; }
.s-price { width: 70px; }
.s-value { width: 67px; }
.s-net { flex: 1; display: flex; align-items: center; justify-content: space-between; padding-right: 34px; }
```
